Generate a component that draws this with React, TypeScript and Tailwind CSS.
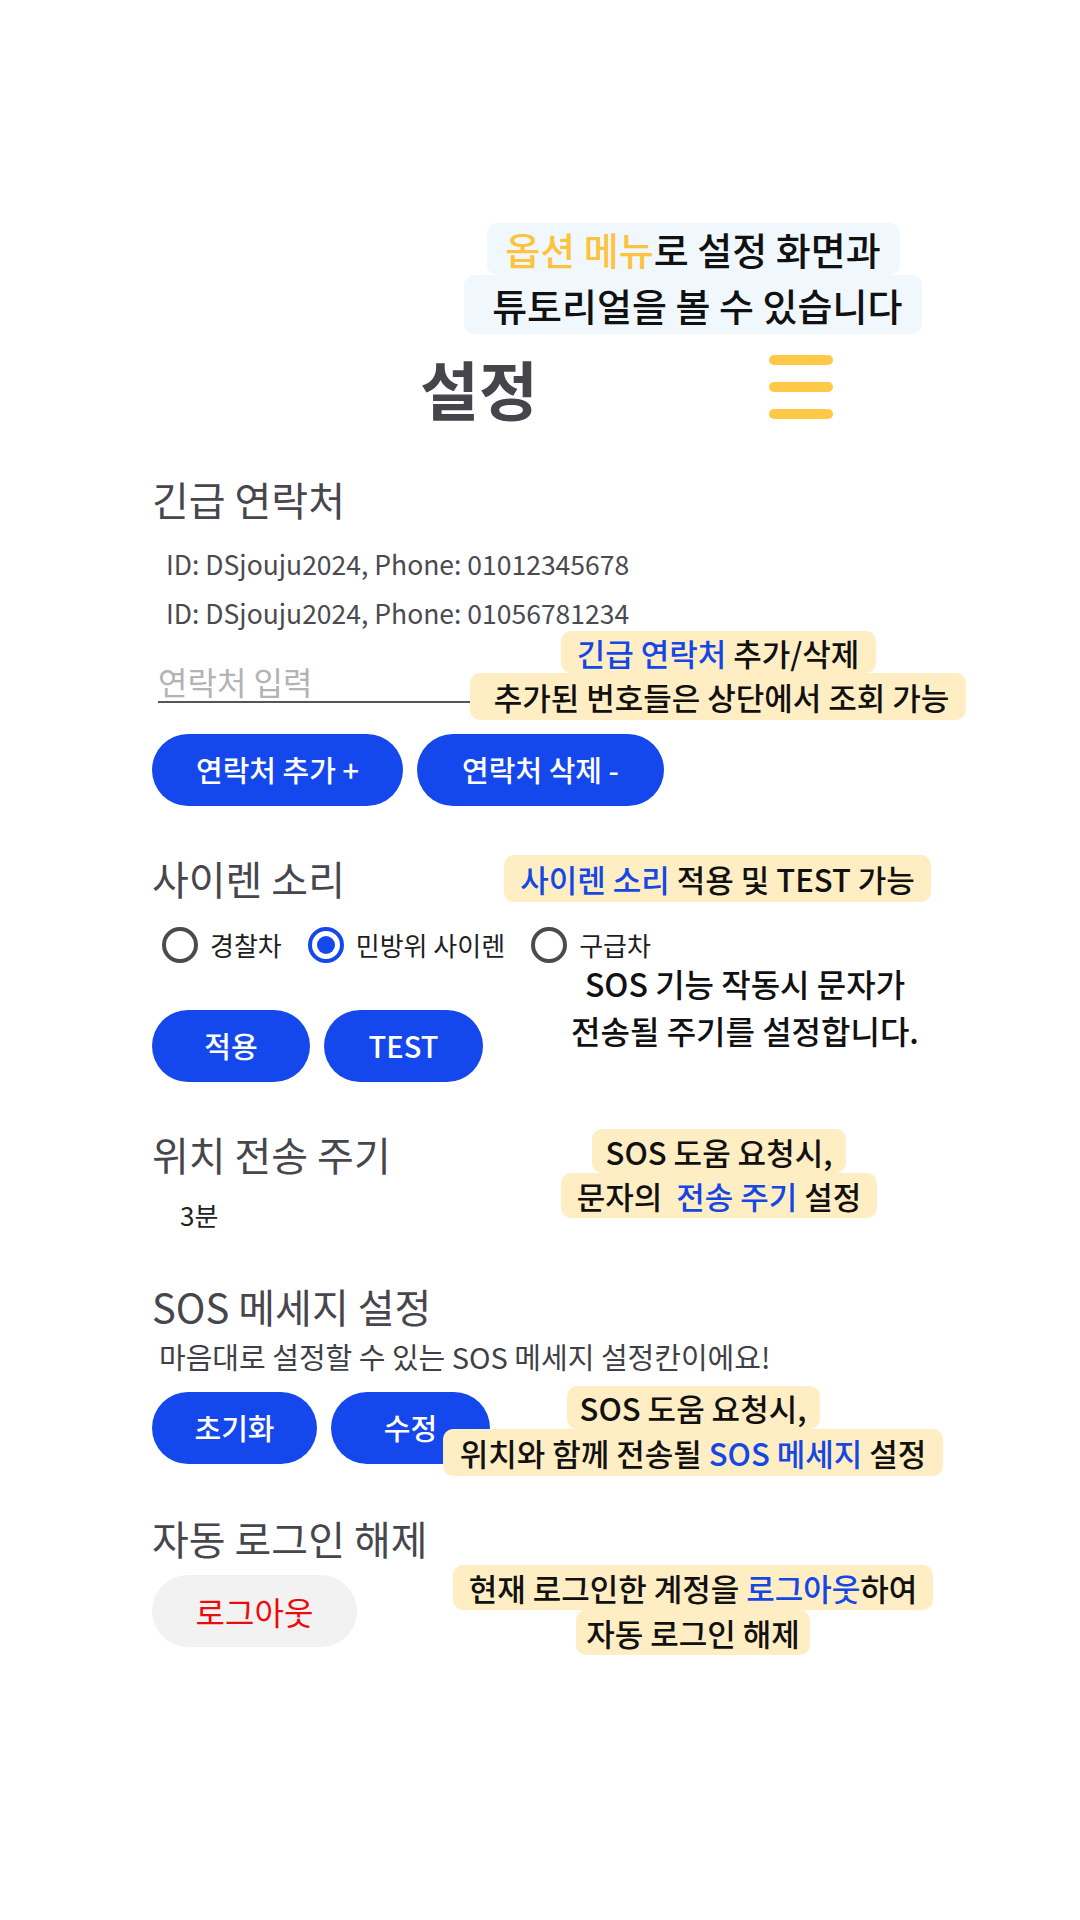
import React from "react";

const BLUE = "text-[#1447e6]";

function Note({
  left,
  top,
  width,
  lines,
  tone = "yellow",
  size = "text-[31px]",
}: {
  left: number;
  top: number;
  width: number;
  lines: { w: number; h: number; content: React.ReactNode }[];
  tone?: "yellow" | "sky";
  size?: string;
}) {
  const bg = tone === "yellow" ? "bg-[#ffedc3]" : "bg-[#f1f8fd]";
  return (
    <div
      className="absolute flex flex-col items-center"
      style={{ left, top, width }}
    >
      {lines.map((l, i) => (
        <div
          key={i}
          className={`${bg} ${size} flex items-center justify-center rounded-[10px] font-medium leading-none text-[#111] whitespace-pre`}
          style={{ width: l.w, height: l.h }}
        >
          {l.content}
        </div>
      ))}
    </div>
  );
}

function Heading({ children }: { children: React.ReactNode }) {
  return (
    <h2 className="text-[40px] leading-[44px] font-normal text-[#48464d]">
      {children}
    </h2>
  );
}

function BlueButton({ label, w }: { label: string; w: string }) {
  return (
    <button
      className={`${w} h-[72px] rounded-full bg-[#1548ec] text-white text-[29px] font-medium flex items-center justify-center`}
    >
      {label}
    </button>
  );
}

function Radio({ label, checked }: { label: string; checked?: boolean }) {
  return (
    <label className="flex items-center gap-[12px]">
      <span
        className={`w-[36px] h-[36px] rounded-full border-[4px] flex items-center justify-center ${
          checked ? "border-[#1548ec]" : "border-[#4a4a4f]"
        }`}
      >
        {checked && (
          <span className="w-[18px] h-[18px] rounded-full bg-[#1548ec]" />
        )}
      </span>
      <span className="text-[26px] leading-none text-[#1e1e1e]">{label}</span>
    </label>
  );
}

export default function App() {
  const contacts = [
    { id: "DSjouju2024", phone: "01012345678" },
    { id: "DSjouju2024", phone: "01056781234" },
  ];

  return (
    <div className="relative w-[1080px] min-h-[1920px] bg-white font-['Noto_Sans_CJK_KR','Noto_Sans',sans-serif] overflow-hidden">
      <div className="pl-[152px] pt-[355px] flex flex-col">
        {/* 상단 타이틀 + 메뉴 */}
        <div className="flex items-center h-[64px] pl-[268px]">
          <h1 className="w-[349px] text-[64px] leading-none font-bold text-[#47454c]">
            설정
          </h1>
          <div className="flex flex-col gap-[17px]">
            <span className="block w-[64px] h-[10px] rounded-full bg-[#ffc846]" />
            <span className="block w-[64px] h-[10px] rounded-full bg-[#ffc846]" />
            <span className="block w-[64px] h-[10px] rounded-full bg-[#ffc846]" />
          </div>
        </div>

        {/* 긴급 연락처 */}
        <div className="mt-[58px]">
          <Heading>긴급 연락처</Heading>
        </div>
        <div className="mt-[18px] ml-[14px] flex flex-col">
          {contacts.map((c, i) => (
            <p key={i} className="text-[26.5px] leading-[49px] text-[#4b4a50]">
              ID: {c.id}, Phone: {c.phone}
            </p>
          ))}
        </div>
        <div className="mt-[24px] ml-[6px] w-[420px] border-b-2 border-[#555]">
          <p className="text-[32px] leading-[40px] text-[#b3b3b3]">연락처 입력</p>
        </div>
        <div className="mt-[31px] flex gap-[14px]">
          <BlueButton label="연락처 추가 +" w="w-[251px]" />
          <BlueButton label="연락처 삭제 -" w="w-[247px]" />
        </div>

        {/* 사이렌 소리 */}
        <div className="mt-[50px]">
          <Heading>사이렌 소리</Heading>
        </div>
        <div className="mt-[27px] ml-[10px] flex items-center gap-[26px] h-[36px]">
          <Radio label="경찰차" />
          <Radio label="민방위 사이렌" checked />
          <Radio label="구급차" />
        </div>
        <div className="mt-[47px] flex gap-[14px]">
          <BlueButton label="적용" w="w-[158px]" />
          <BlueButton label="TEST" w="w-[159px]" />
        </div>

        {/* 위치 전송 주기 */}
        <div className="mt-[50px]">
          <Heading>위치 전송 주기</Heading>
        </div>
        <p className="mt-[21px] ml-[28px] text-[26px] leading-[36px] text-[#222]">
          3분
        </p>

        {/* SOS 메세지 설정 */}
        <div className="mt-[51px]">
          <Heading>SOS 메세지 설정</Heading>
        </div>
        <p className="mt-[13px] ml-[7px] text-[29px] leading-[30px] text-[#3f3f46]">
          마음대로 설정할 수 있는 SOS 메세지 설정칸이에요!
        </p>
        <div className="mt-[21px] flex gap-[14px]">
          <BlueButton label="초기화" w="w-[165px]" />
          <BlueButton label="수정" w="w-[159px]" />
        </div>

        {/* 자동 로그인 해제 */}
        <div className="mt-[52px]">
          <Heading>자동 로그인 해제</Heading>
        </div>
        <div className="mt-[15px]">
          <button className="w-[205px] h-[72px] rounded-full bg-[#f2f2f2] text-[32px] text-[#ec0b0b] flex items-center justify-center">
            로그아웃
          </button>
        </div>
      </div>

      {/* 튜토리얼 안내 */}
      <Note
        left={464}
        top={223}
        width={458}
        tone="sky"
        size="text-[38px]"
        lines={[
          {
            w: 413,
            h: 52,
            content: (
              <>
                <span className="text-[#fdc33e]">옵션 메뉴</span>로 설정 화면과
              </>
            ),
          },
          { w: 458, h: 59, content: " 튜토리얼을 볼 수 있습니다" },
        ]}
      />
      <Note
        left={470}
        top={631}
        width={496}
        lines={[
          {
            w: 315,
            h: 42,
            content: (
              <>
                <span className={BLUE}>긴급 연락처</span> 추가/삭제
              </>
            ),
          },
          { w: 496, h: 47, content: " 추가된 번호들은 상단에서 조회 가능" },
        ]}
      />
      <Note
        left={504}
        top={855}
        width={427}
        lines={[
          {
            w: 427,
            h: 47,
            content: (
              <>
                <span className={BLUE}>사이렌 소리</span> 적용 및 TEST 가능
              </>
            ),
          },
        ]}
      />
      <div className="absolute left-[545px] top-[960px] w-[400px] text-center text-[32px] leading-[47px] font-medium text-[#111]">
        <p>SOS 기능 작동시 문자가</p>
        <p>전송될 주기를 설정합니다.</p>
      </div>
      <Note
        left={561}
        top={1129}
        width={316}
        lines={[
          { w: 254, h: 44, content: "SOS 도움 요청시," },
          {
            w: 316,
            h: 45,
            content: (
              <>
                문자의 <span className={BLUE}> 전송 주기</span> 설정
              </>
            ),
          },
        ]}
      />
      <Note
        left={443}
        top={1386}
        width={500}
        lines={[
          { w: 253, h: 43, content: "SOS 도움 요청시," },
          {
            w: 500,
            h: 47,
            content: (
              <>
                위치와 함께 전송될 <span className={BLUE}>SOS 메세지</span> 설정
              </>
            ),
          },
        ]}
      />
      <Note
        left={453}
        top={1565}
        width={480}
        lines={[
          {
            w: 480,
            h: 45,
            content: (
              <>
                현재 로그인한 계정을 <span className={BLUE}>로그아웃</span>하여
              </>
            ),
          },
          { w: 234, h: 45, content: "자동 로그인 해제" },
        ]}
      />
    </div>
  );
}
